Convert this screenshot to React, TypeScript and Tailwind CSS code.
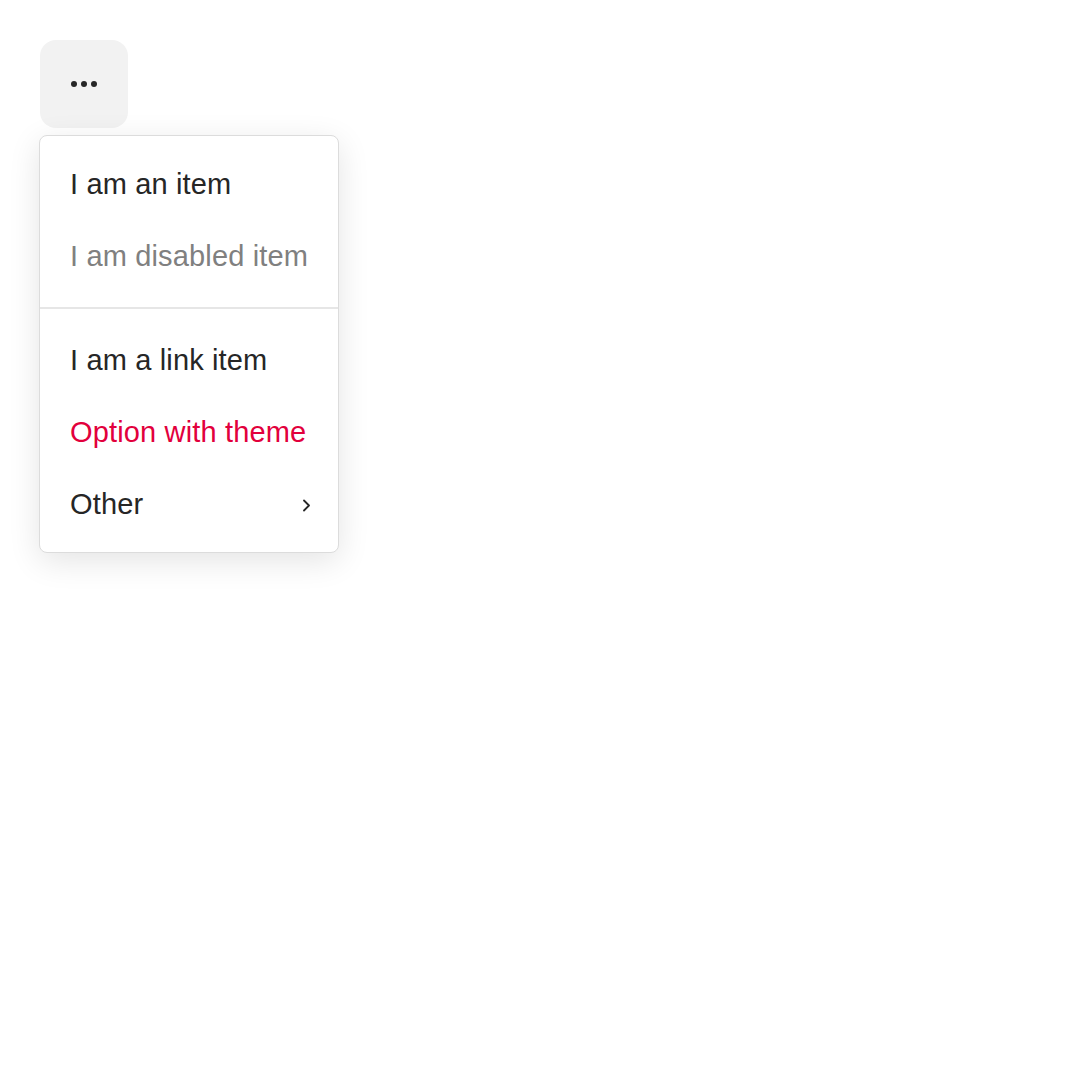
import React from "react";

type Item = { label: string; tone?: "normal" | "disabled" | "danger"; submenu?: boolean };

const groups: Item[][] = [
  [{ label: "I am an item" }, { label: "I am disabled item", tone: "disabled" }],
  [
    { label: "I am a link item" },
    { label: "Option with theme", tone: "danger" },
    { label: "Other", submenu: true },
  ],
];

const toneClass = {
  normal: "text-[#262626]",
  disabled: "text-[#808080]",
  danger: "text-[#e2003c]",
};

const MenuRow: React.FC<{ item: Item }> = ({ item }) => (
  <div
    className={`flex h-[72px] items-center justify-between pl-[30px] pr-[27px] text-[29px] tracking-[0.15px] ${
      toneClass[item.tone ?? "normal"]
    }`}
  >
    <span>{item.label}</span>
    {item.submenu && (
      <svg width="9" height="13" viewBox="0 0 9 13" fill="none" className="text-[#262626]">
        <path d="M2 1.5L7 6.5L2 11.5" stroke="currentColor" strokeWidth="1.8" strokeLinecap="round" strokeLinejoin="round" />
      </svg>
    )}
  </div>
);

export default function App() {
  return (
    <div className="min-h-screen bg-white p-10 font-['Liberation_Sans',Arial,sans-serif]">
      <button className="flex h-[88px] w-[88px] items-center justify-center gap-1 rounded-2xl bg-[#f2f2f2]">
        <span className="h-[6px] w-[6px] rounded-full bg-[#262626]" />
        <span className="h-[6px] w-[6px] rounded-full bg-[#262626]" />
        <span className="h-[6px] w-[6px] rounded-full bg-[#262626]" />
      </button>

      <div className="ml-[-1px] mt-[7px] w-[300px] rounded-lg border border-[#dcdcdc] bg-white shadow-[0_8px_32px_rgba(0,0,0,0.11)]">
        <div className="pb-[14px] pt-[13px]">
          {groups[0].map((item) => (
            <MenuRow key={item.label} item={item} />
          ))}
        </div>
        <div className="h-[2px] bg-[#e6e6e6]" />
        <div className="pb-[11px] pt-[16px]">
          {groups[1].map((item) => (
            <MenuRow key={item.label} item={item} />
          ))}
        </div>
      </div>
    </div>
  );
}
